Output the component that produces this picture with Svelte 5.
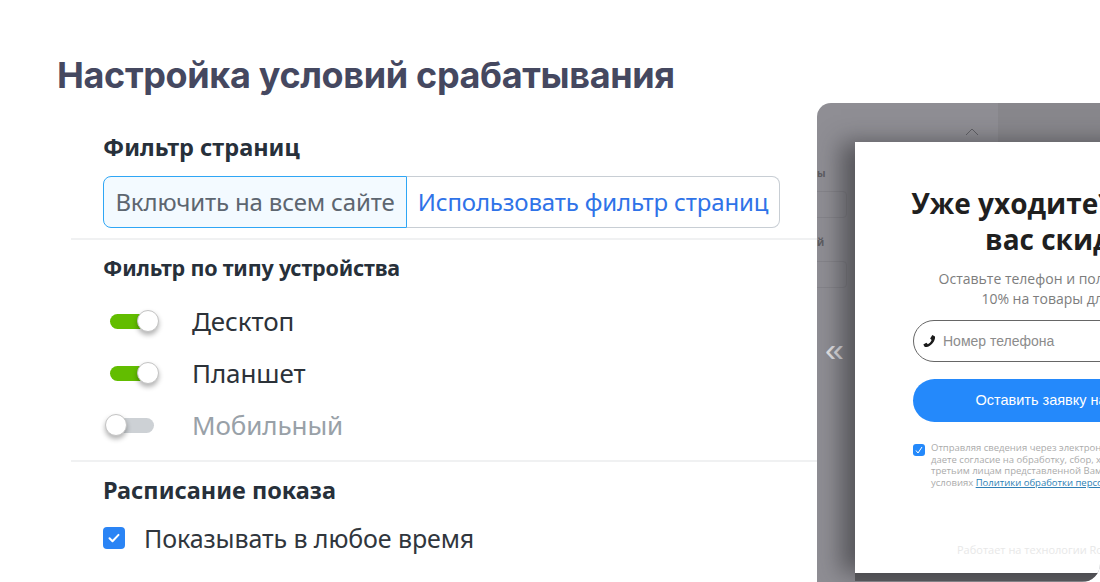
<script>
  const devices = [
    { label: 'Десктоп', on: true },
    { label: 'Планшет', on: true },
    { label: 'Мобильный', on: false }
  ];
</script>

<main class="page">
  <h1>Настройка условий срабатывания</h1>

  <section class="block first">
    <h2>Фильтр страниц</h2>
    <div class="segment">
      <button class="seg active">Включить на всем сайте</button>
      <button class="seg">Использовать фильтр страниц</button>
    </div>
  </section>

  <section class="block second">
    <h2 class="narrow">Фильтр по типу устройства</h2>
    <ul class="devices">
      {#each devices as d}
        <li class:off={!d.on}>
          <span class="switch" class:on={d.on}><span class="knob"></span></span>
          <span>{d.label}</span>
        </li>
      {/each}
    </ul>
  </section>

  <section class="block third">
    <h2>Расписание показа</h2>
    <label class="check">
      <span class="box">
        <svg viewBox="0 0 22 22" width="22" height="22"><path d="M6.5 11.3l3 3 6-6.4" fill="none" stroke="#fff" stroke-width="2" stroke-linecap="round" stroke-linejoin="round"/></svg>
      </span>
      Показывать в любое время
    </label>
  </section>

  <aside class="preview">
    <div class="bg-labels">
      <span class="bg-l one">ы</span>
      <span class="bg-f f1"></span>
      <span class="bg-l two">й</span>
      <span class="bg-f f2"></span>
    </div>
    <div class="seam"></div>
    <svg class="up" viewBox="0 0 14 8" width="14" height="8"><path d="M1 7l6-6 6 6" fill="none" stroke="#5f5f64" stroke-width="1"/></svg>
    <span class="prev">«</span>
    <div class="modal">
      <h3>Уже уходите? Дарим<br />вас скидку</h3>
      <p class="sub">Оставьте телефон и получите скидку<br />10% на товары для дома</p>
      <div class="phone">
        <svg viewBox="0 0 16 16" width="14" height="14"><path d="M4.2 1.2L1.6 2.6C1 3 1 4 1.200 5c1 4.500 5 8.800 9.600 9.900 1 .2 2 .1 2.400-.6l1.300-2.400-3.500-2-1.700 1.700C7.800 11 6 9 5 6.800L6.700 5z" fill="#1b1b1b" transform="matrix(-1 0 0 1 16 0)"/></svg>
        <span>Номер телефона</span>
      </div>
      <div class="cta">Оставить заявку на скидку</div>
      <div class="consent">
        <span class="mini">
          <svg viewBox="0 0 12 12" width="12" height="12"><path d="M3 6.500l2 2.500 4-6" fill="none" stroke="#fff" stroke-width="1"/></svg>
        </span>
        <p>Отправляя сведения через электронную форму, вы<br />даете согласие на обработку, сбор, хранение и передачу<br />третьим лицам представленной Вами информации на<br />условиях <a href="#top">Политики обработки персональных данных</a></p>
      </div>
      <div class="powered">Работает на технологии Roistat</div>
    </div>
  </aside>
</main>

<style>
  :global(body) { margin: 0; background: #fff; }
  .page {
    position: relative;
    width: 1100px;
    height: 582px;
    overflow: hidden;
    box-sizing: border-box;
    padding-top: 52px;
    font-family: "Noto Sans", sans-serif;
    color: #2c3239;
  }
  h1 {
    margin: 0 0 0 57px;
    font: 700 36px/46px Inter, sans-serif;
    letter-spacing: -0.35px;
    color: #454860;
  }
  .block { margin-left: 71px; padding-left: 32px; }
  .first { margin-top: 34px; height: 108px; border-bottom: 2px solid #f0f1f2; box-sizing: border-box; }
  .second { height: 222px; border-bottom: 2px solid #f0f1f2; box-sizing: border-box; padding-top: 13px; }
  .third { padding-top: 13px; }
  h2 { margin: 0; font: 700 23.500px/30px "Noto Sans", sans-serif; color: #27303a; }
  h2.narrow { font-stretch: normal; font-size: 21.500px; letter-spacing: -.2px; }
  .segment { display: flex; width: 677px; height: 52px; margin-top: 14px; }
  .seg {
    box-sizing: border-box;
    height: 52px;
    margin: 0;
    background: #fff;
    font: 400 24px/1 "Noto Sans", sans-serif;
    letter-spacing: -0.15px;
    padding: 0;
    color: #2f73e8;
    border: 1.500px solid #c8ced4;
    border-left: 0;
    border-radius: 0 8px 8px 0;
    flex: 1;
  }
  .seg.active {
    flex: 0 0 304px;
    color: #5d6670;
    background: #f3faff;
    border: 1.500px solid #2fa6f5;
    border-radius: 8px 0 0 8px;
  }
  .devices { list-style: none; margin: 12px 0 0; padding: 0; }
  .devices li {
    display: flex;
    align-items: center;
    height: 52px;
    font-size: 26px;
    letter-spacing: -0.1px;
    color: #2c3239;
  }
  .devices li.off { color: #99a1a8; }
  .switch {
    position: relative;
    flex: none;
    width: 48px;
    height: 15px;
    margin: 0 34px 0 7px;
    border-radius: 8px;
    background: #cdd1d5;
  }
  .switch.on { background: #62bd00; }
  .off .switch { margin-left: 3px; margin-right: 38px; }
  .knob {
    position: absolute;
    top: -4px;
    left: -1px;
    width: 22px;
    height: 22px;
    box-sizing: border-box;
    border-radius: 50%;
    background: #fff;
    border: 1.500px solid #c4c4c4;
    box-shadow: 0 3px 5px rgba(0,0,0,.3);
  }
  .on .knob { left: 27px; }
  .check {
    display: flex;
    align-items: center;
    margin-top: 15px;
    font-size: 25px;
    letter-spacing: -0.1px;
    color: #30363d;
    gap: 19px;
    height: 36px;
  }
  .box {
    width: 22px;
    height: 22px;
    border-radius: 4px;
    background: #2a84f5;
  }
  .box svg { display: block; }

  .preview {
    position: absolute;
    left: 817px;
    top: 103px;
    width: 283px;
    height: 479px;
    border-radius: 14px 0 18px 0;
    overflow: hidden;
    background: #8f8e94;
    font-family: "Open Sans", sans-serif;
  }
  .preview::after {
    content: "";
    position: absolute;
    left: 0; top: 0; right: 0; bottom: 0;
    pointer-events: none;
  }
  .seam { position: absolute; left: 181px; top: 0; right: 0; height: 40px; background: #88878c; }
  .up { position: absolute; left: 148px; top: 25px; }
  .prev {
    position: absolute;
    left: 8px;
    top: 226px;
    font: 400 34px/40px "Liberation Sans", sans-serif;
    color: #e6e5e8;
  }
  .bg-l { position: absolute; left: 0; font: 700 10px/12px "Open Sans", sans-serif; color: #5c5b60; }
  .bg-l.one { top: 64px; }
  .bg-l.two { top: 133px; }
  .bg-f { position: absolute; left: -8px; width: 36px; height: 25px; border: 1px solid #85848a; border-radius: 4px; }
  .f1 { top: 88px; }
  .f2 { top: 158px; }
  .modal {
    position: absolute;
    left: 38px;
    top: 39px;
    width: 420px;
    height: 431px;
    background: #fff;
    box-shadow: -14px 0 22px rgba(40,40,44,.55), 0 8px 0 rgba(60,60,64,.6);
    color: #1e1e1e;
  }
  h3 {
    position: absolute;
    left: 0;
    top: 43px;
    width: 420px;
    margin: 0;
    text-align: center;
    font: 700 28px/36px "Open Sans", sans-serif;
    white-space: nowrap;
    color: #1f1f1f;
  }
  .sub {
    position: absolute;
    left: 0;
    top: 127px;
    width: 420px;
    margin: 0;
    text-align: center;
    font: 400 14px/20px "Open Sans", sans-serif;
    color: #7d7d7d;
    white-space: nowrap;
  }
  .phone {
    position: absolute;
    left: 58px;
    top: 178px;
    width: 304px;
    height: 42px;
    box-sizing: border-box;
    border: 1px solid #666;
    border-radius: 21px;
    display: flex;
    align-items: center;
    padding-left: 8px;
    gap: 7px;
    font: 400 14px/1 "Liberation Sans", sans-serif;
    color: #8c8c8c;
  }
  .cta {
    position: absolute;
    left: 58px;
    top: 237px;
    width: 304px;
    height: 43px;
    border-radius: 22px;
    background: #2489fb;
    color: #fff;
    font: 400 14.500px/43px "Liberation Sans", sans-serif;
    text-align: center;
    white-space: nowrap;
  }
  .mini {
    position: absolute;
    left: 58px;
    top: 302px;
    width: 12px;
    height: 12px;
    border-radius: 3px;
    background: #2489fb;
  }
  .mini svg { display: block; }
  .consent p {
    position: absolute;
    left: 76px;
    top: 300px;
    margin: 0;
    font: 400 9.500px/11.700px "Open Sans", sans-serif;
    color: #ababab;
    white-space: nowrap;
  }
  .consent a { color: #2f7fb5; }
  .powered {
    position: absolute;
    left: 102px;
    top: 401px;
    font: 400 11px/14px "Open Sans", sans-serif;
    color: #e8e8e8;
    white-space: nowrap;
  }
</style>
